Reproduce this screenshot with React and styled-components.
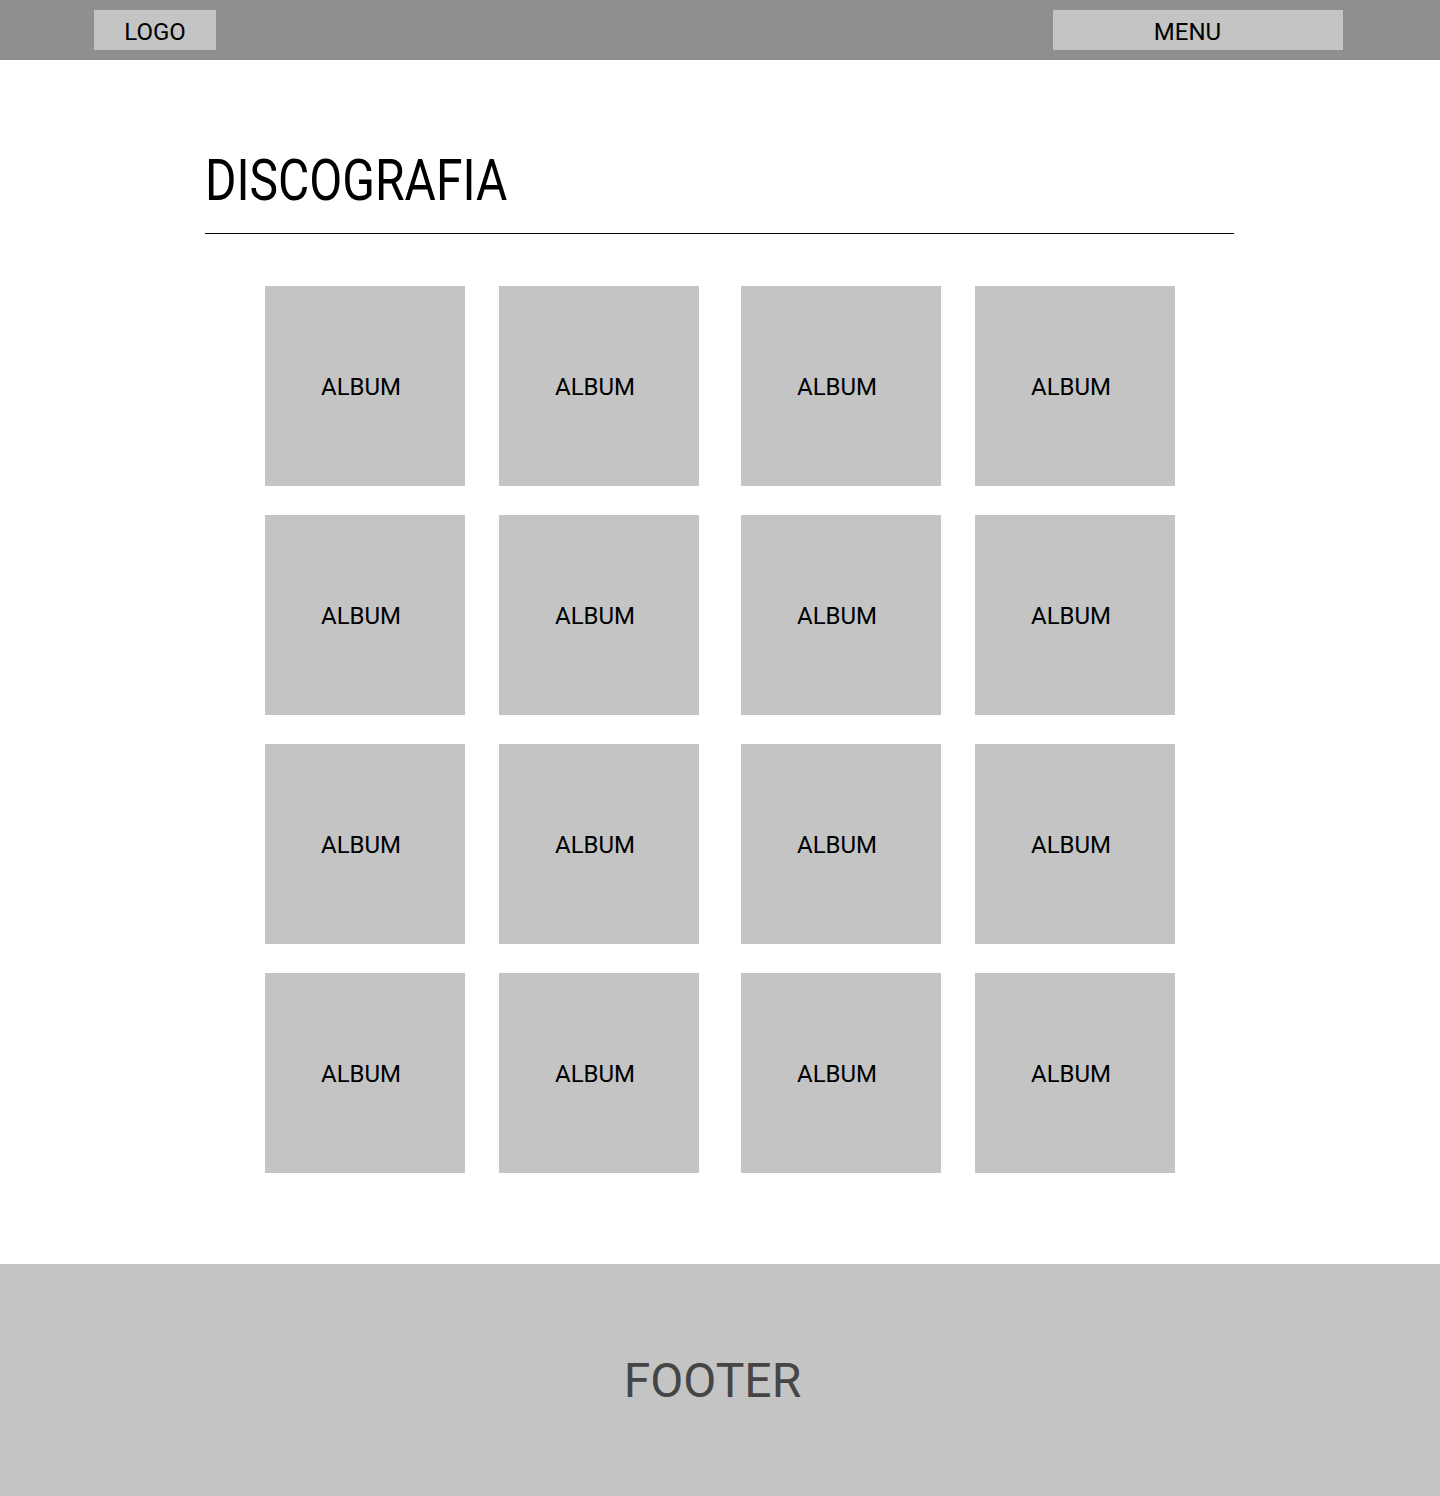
import styled, { createGlobalStyle } from "styled-components";

const GlobalStyle = createGlobalStyle`
  body{
    margin:0;
    font-family: Roboto, "Liberation Sans", sans-serif;
    background:#fff;
    color:#000;
  }
`;

const Header = styled.header`
  height:60px;
  background:#8f8f8f;
  display:flex;
  justify-content:space-between;
  align-items:center;
  padding:0 97px 0 94px;
`;

const NavBox = styled.div`
  box-sizing:border-box;
  height:40px;
  width:${p => p.$width}px;
  background:#c4c4c4;
  padding:4px ${p => p.$shift || 0}px 0 0;
  line-height:36px;
  font-size:24px;
  text-align:center;
`;

const Main = styled.main`
  width:1029px;
  margin-left:205px;
  padding:96px 0 91px;
`;

const Title = styled.h1`
  margin:0 0 21px;
  height:56px;
  font-size:48px;
  font-weight:400;
  line-height:56px;
  transform:scaleY(1.19);
  transform-origin:left 44px;
`;

const Rule = styled.hr`
  margin:0;
  border:0;
  border-top:1px solid #000;
`;

const Albums = styled.div`
  display:grid;
  grid-template-columns:200px 200px 208px 200px;
  grid-auto-rows:200px;
  column-gap:34px;
  row-gap:29px;
  margin:52px 0 0 60px;
`;

const Album = styled.div`
  width:200px;
  background:#c4c4c4;
  display:flex;
  align-items:center;
  justify-content:center;
  padding:2px 8px 0 0;
  box-sizing:border-box;
  font-size:24px;
  &:nth-child(4n+3){
    justify-self:end;
  }
`;

const Footer = styled.footer`
  height:232px;
  background:#c4c4c4;
  display:flex;
  align-items:center;
  justify-content:center;
  padding-right:15px;
  font-size:48px;
  color:#454545;
`;

export default function App(){
  return <>
    <GlobalStyle />
    <Header>
      <NavBox $width={122}>LOGO</NavBox>
      <NavBox $width={290} $shift={21}>MENU</NavBox>
    </Header>
    <Main>
      <Title>DISCOGRAFIA</Title>
      <Rule />
      <Albums>
        {Array.from({length:16}).map((_, i) =>
          <Album key={i}>ALBUM</Album>
        )}
      </Albums>
    </Main>
    <Footer>FOOTER</Footer>
  </>;
}
